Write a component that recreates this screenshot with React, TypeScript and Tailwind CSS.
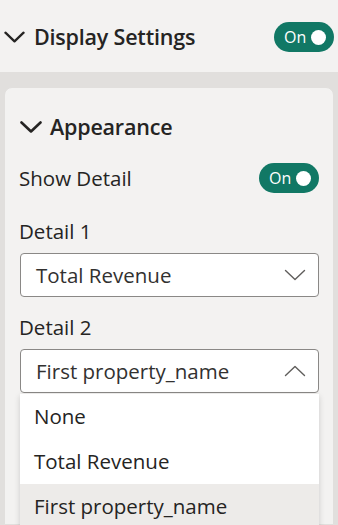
import React, { useState } from 'react';

const font = { fontFamily: '"Open Sans", "Noto Sans", sans-serif' };

const Chevron = ({ up = false, className = '', width = 1.6 }: { up?: boolean; className?: string; width?: number }) => (
  <svg viewBox="0 0 22 12" className={className} fill="none" stroke="currentColor" strokeWidth={width} strokeLinecap="round" strokeLinejoin="round">
    {up ? <path d="M1.5 10.5 L11 1.5 L20.5 10.5" /> : <path d="M1.5 1.5 L11 10.5 L20.5 1.5" />}
  </svg>
);

const Toggle = ({ on, onClick }: { on: boolean; onClick: () => void }) => (
  <button
    onClick={onClick}
    className="flex h-[30px] w-[60px] items-center justify-between rounded-full bg-[#117865] pl-[10px] pr-[8px] text-[16px] text-white"
  >
    <span className="-mt-[1px] leading-none">{on ? 'On' : 'Off'}</span>
    <span className="h-[15px] w-[15px] rounded-full bg-white" />
  </button>
);

const options = ['None', 'Total Revenue', 'First property_name'];

export default function App() {
  const [display, setDisplay] = useState(true);
  const [detail, setDetail] = useState(true);
  const [detail2, setDetail2] = useState('First property_name');

  return (
    <div style={font} className="flex h-[525px] w-[338px] flex-col overflow-hidden bg-[#e1dfdd] text-[#252423]">
      {/* section header */}
      <div className="flex h-[72px] shrink-0 items-center justify-between bg-[#f3f2f1] pl-[4px] pr-[4px] pt-[2px]">
        <div className="flex items-center gap-[9px]">
          <Chevron width={2.4} className="h-[12px] w-[21px] text-[#252423]" />
          <span className="text-[21.5px] font-semibold leading-[28px] tracking-[-0.2px]">Display Settings</span>
        </div>
        <Toggle on={display} onClick={() => setDisplay(!display)} />
      </div>

      <div className="flex-1 px-[4px] pt-[15px]">
        <div className="h-full rounded-t-[8px] border border-[#e1dfdd] bg-[#f3f2f1] pl-[14px] pr-[14px] pt-[25px]">
          <div className="flex items-center gap-[8px] pl-[1px]">
            <Chevron width={2.6} className="h-[12px] w-[22px] text-[#252423]" />
            <span className="text-[21.5px] font-semibold leading-[28px] tracking-[-0.2px]">Appearance</span>
          </div>

          <div className="mt-[22px] flex items-center justify-between">
            <span className="text-[20.5px] leading-[28px]">Show Detail</span>
            <Toggle on={detail} onClick={() => setDetail(!detail)} />
          </div>

          <div className="mt-[24px] text-[20.5px] leading-[28px]">Detail 1</div>
          <div className="ml-[1px] mt-[8px] flex h-[44px] items-center justify-between rounded-[4px] border border-[#8a8886] bg-white pl-[15px] pr-[12px]">
            <span className="text-[20.5px] leading-[28px] text-[#323130]">Total Revenue</span>
            <Chevron width={1.4} className="h-[12px] w-[22px] text-[#605e5c]" />
          </div>

          <div className="mt-[16px] text-[20.5px] leading-[28px]">Detail 2</div>
          <div className="relative ml-[1px] mt-[8px]">
            <div className="flex h-[44px] items-center justify-between rounded-[4px] border border-[#8a8886] bg-white pl-[15px] pr-[12px]">
              <span className="text-[20.5px] leading-[28px] text-[#323130]">{detail2}</span>
              <Chevron up width={1.4} className="h-[12px] w-[22px] text-[#605e5c]" />
            </div>
            <div className="absolute left-0 right-0 top-[45px] bg-white shadow-[0_2px_6px_rgba(0,0,0,0.16)]">
              {options.map((o) => (
                <div
                  key={o}
                  onClick={() => setDetail2(o)}
                  className={`flex h-[45px] items-center pl-[14px] text-[20.5px] ${o === detail2 ? 'bg-[#edebe9]' : 'bg-white'}`}
                >
                  {o}
                </div>
              ))}
            </div>
          </div>
        </div>
      </div>
    </div>
  );
}
